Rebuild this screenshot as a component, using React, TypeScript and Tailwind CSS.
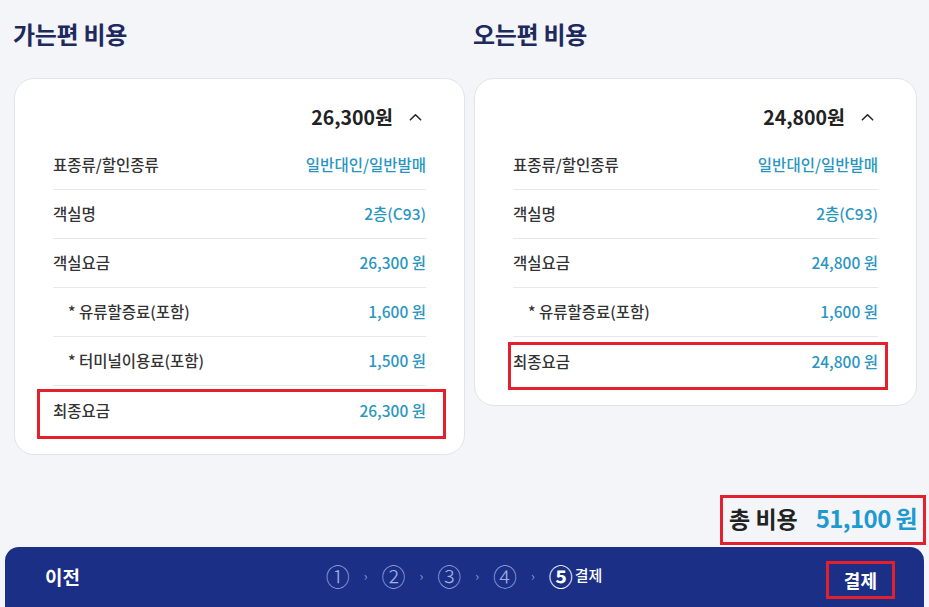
import React from "react";

type Row = { label: string; value: string; sub?: boolean };

const outbound: Row[] = [
  { label: "표종류/할인종류", value: "일반대인/일반발매" },
  { label: "객실명", value: "2층(C93)" },
  { label: "객실요금", value: "26,300 원" },
  { label: "* 유류할증료(포함)", value: "1,600 원", sub: true },
  { label: "* 터미널이용료(포함)", value: "1,500 원", sub: true },
];

const inbound: Row[] = [
  { label: "표종류/할인종류", value: "일반대인/일반발매" },
  { label: "객실명", value: "2층(C93)" },
  { label: "객실요금", value: "24,800 원" },
  { label: "* 유류할증료(포함)", value: "1,600 원", sub: true },
];

const font = { fontFamily: '"Noto Sans CJK KR", "Noto Sans", sans-serif' };

function ChevronUp() {
  return (
    <svg className="w-[15px] h-[15px]" viewBox="0 0 16 16" fill="none" stroke="#222" strokeWidth="1.6" strokeLinecap="round" strokeLinejoin="round">
      <path d="M2.5 10.5 8 5l5.5 5.5" />
    </svg>
  );
}

function FareCard({ title, total, rows, final, width, boxCls }: { title: string; total: string; rows: Row[]; final: string; width: string; boxCls: string }) {
  return (
    <section className={width}>
      <h2 className="text-[24px] font-bold text-[#1e2a5e] h-[40px] mt-[14px] leading-[40px] -ml-px tracking-[-0.3px]">{title}</h2>
      <div className="mt-[24px] bg-white rounded-[20px] border border-[#e1e4ea] px-[38px] pb-[19px]">
        <div className="h-[62px] pt-[14px] flex items-center justify-end gap-[15px] pr-[3px]">
          <span className="text-[19.5px] font-bold text-[#222]">{total}</span>
          <ChevronUp />
        </div>
        {rows.map((r) => (
          <div key={r.label} className="h-[49px] flex items-center justify-between border-b border-[#e6e8ec] text-[15.5px] font-medium">
            <span className={`text-[#333] ${r.sub ? "pl-[15px]" : ""}`}>{r.label}</span>
            <span className="text-[#2a96bf]">{r.value}</span>
          </div>
        ))}
        <div className="relative h-[49px] flex items-center justify-between text-[15.5px] font-medium">
          <span className="text-[#333]">최종요금</span>
          <span className="text-[#2a96bf]">{final}</span>
          <span className={`absolute border-[3px] border-[#e3202b] pointer-events-none ${boxCls}`} />
        </div>
      </div>
    </section>
  );
}

export default function App() {
  return (
    <div className="w-[929px] h-[607px] bg-[#f3f5f8] overflow-hidden flex flex-col" style={font}>
      <div className="flex gap-[9px] pl-[14px]">
        <FareCard title="가는편 비용" total="26,300원" rows={outbound} final="26,300 원" width="w-[451px]" boxCls="-left-[16px] -right-[20px] top-[3px] -bottom-[4px]" />
        <FareCard title="오는편 비용" total="24,800원" rows={inbound} final="24,800 원" width="w-[443px]" boxCls="-left-[5px] -right-[10px] top-[5px] bottom-[-4px]" />
      </div>
      <div className="flex-1 flex flex-col justify-end">
        <div className="flex justify-end pr-[3px] mb-[2px]">
          <div className="h-[50px] w-[206px] border-[3px] border-[#e3202b] flex items-center gap-[18px] pl-[6px] pb-[4px] overflow-hidden">
            <span className="text-[23px] font-bold text-[#222] whitespace-nowrap">총 비용</span>
            <span className="text-[24px] font-bold text-[#1f9ad0] tracking-[-0.6px] whitespace-nowrap">51,100 원</span>
          </div>
        </div>
        <div className="mx-[5px] h-[60px] bg-[#1b2f86] rounded-t-[14px] flex items-center justify-between pl-[40px] pr-[29px]">
          <span className="text-[19px] font-bold text-white w-[120px]">이전</span>
          <div className="flex items-center gap-[14px] text-[#9fb1e3] text-[24px] font-light -mt-[3px] -ml-[12px]">
            <span>①</span><span className="text-[13px]">›</span>
            <span>②</span><span className="text-[13px]">›</span>
            <span>③</span><span className="text-[13px]">›</span>
            <span>④</span><span className="text-[13px]">›</span>
            <span className="text-white flex items-center gap-[2px]"><span className="font-bold">⑤</span><span className="text-[15px] font-medium">결제</span></span>
          </div>
          <div className="w-[120px] flex justify-end">
            <span className="text-[18px] font-bold text-white border-[3px] border-[#e3202b] px-[15px] h-[38px] flex items-center mt-[6px]">결제</span>
          </div>
        </div>
      </div>
    </div>
  );
}
